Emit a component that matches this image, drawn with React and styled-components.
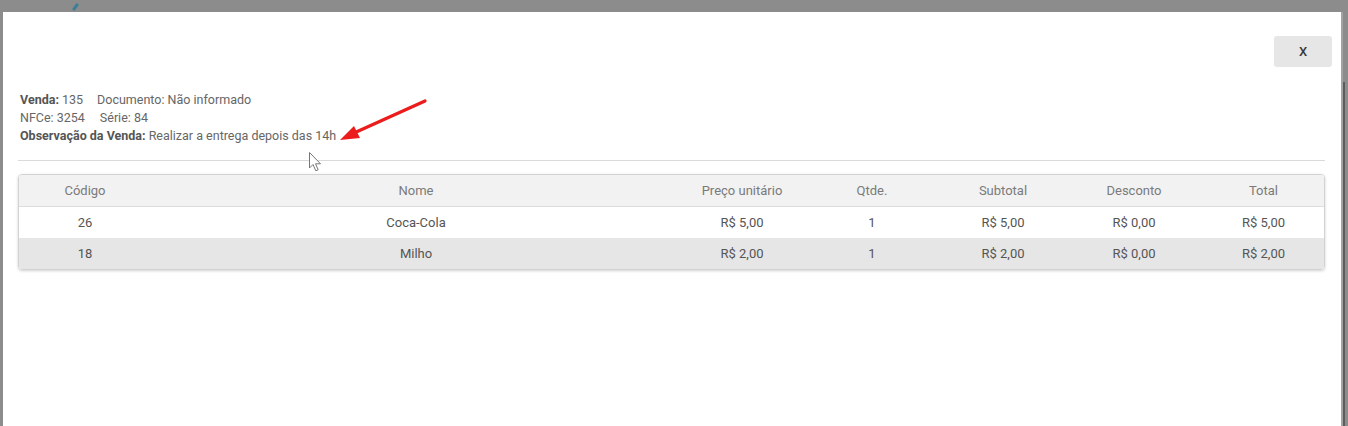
import React from 'react';
import styled, { createGlobalStyle } from 'styled-components';

const Global = createGlobalStyle`
  html, body {
    margin: 0;
    padding: 0;
    height: 100%;
    overflow: hidden;
  }
  body {
    background: #8c8c8c;
    font-family: Roboto, "Liberation Sans", Arial, sans-serif;
  }
`;

const Backdrop = styled.div`
  display: flex;
  height: 426px;
  padding: 12px 0 0 3px;
  box-sizing: border-box;
  position: relative;
`;

const TopMark = styled.span`
  position: absolute;
  left: 74px;
  top: 3px;
  width: 3px;
  height: 8px;
  background: #3b7f95;
  transform: rotate(35deg);
  border-radius: 1px;
`;

const Modal = styled.div`
  flex: 1;
  background: #fff;
  position: relative;
  display: flex;
  flex-direction: column;
`;

const Gutter = styled.div`
  width: 7px;
  display: flex;
  .edge {
    width: 2px;
    background: #a3a3a3;
  }
  .bar {
    width: 2px;
    margin-top: 70px;
    background: #5c5c5c;
  }
`;

const Header = styled.div`
  display: flex;
  justify-content: flex-end;
  padding: 24px 9px 0 0;
`;

const CloseButton = styled.button`
  width: 58px;
  height: 31px;
  border: none;
  border-radius: 3px;
  background: #e6e6e6;
  color: #3a3a3a;
  font-family: Roboto, "Liberation Sans", Arial, sans-serif;
  font-size: 13px;
  font-weight: 500;
  cursor: pointer;
`;

const Info = styled.div`
  margin-top: 24px;
  padding: 0 16px 0 17px;
  font-size: 12.5px;
  line-height: 18px;
  color: #666;
`;

const Line = styled.div`
  display: flex;
`;

const Field = styled.span`
  margin-right: ${p => p.gap || 0}px;
  b {
    color: #555;
    font-weight: 700;
  }
`;

const Divider = styled.hr`
  margin: 15px 16px 0 15px;
  border: none;
  border-top: 1px solid #dadada;
`;

const TableBox = styled.div`
  margin: 13px 16px 0 15px;
  border: 1px solid #d2d2d2;
  border-radius: 4px;
  overflow: hidden;
  box-shadow: 0 1px 3px rgba(0, 0, 0, 0.18);
`;

const Table = styled.table`
  width: 100%;
  border-collapse: collapse;
  table-layout: fixed;
  font-size: 13px;
`;

const Th = styled.th`
  height: 31px;
  padding: 0;
  font-weight: 400;
  color: #7a7a7a;
  background: #f2f2f2;
  border-bottom: 1px solid #dcdcdc;
  text-align: center;
`;

const Row = styled.tr`
  background: ${p => (p.alt ? '#e6e6e6' : '#fff')};
`;

const Td = styled.td`
  height: 31px;
  padding: 0;
  color: #555;
  text-align: center;
`;

const Arrow = styled.svg`
  position: absolute;
  left: 327px;
  top: 78px;
`;

const Pointer = styled.svg`
  position: absolute;
  left: 305px;
  top: 139px;
`;

const columns = [
  { label: 'Código', width: 132 },
  { label: 'Nome', width: 530 },
  { label: 'Preço unitário', width: 122 },
  { label: 'Qtde.', width: 138 },
  { label: 'Subtotal', width: 124 },
  { label: 'Desconto', width: 138 },
  { label: 'Total' },
];

const items = [
  ['26', 'Coca-Cola', 'R$ 5,00', '1', 'R$ 5,00', 'R$ 0,00', 'R$ 5,00'],
  ['18', 'Milho', 'R$ 2,00', '1', 'R$ 2,00', 'R$ 0,00', 'R$ 2,00'],
];

export default function App() {
  return (
    <>
      <Global />
      <Backdrop>
        <TopMark />
        <Modal>
          <Header>
            <CloseButton>X</CloseButton>
          </Header>
          <Info>
            <Line>
              <Field gap={14}><b>Venda:</b> 135</Field>
              <Field>Documento: Não informado</Field>
            </Line>
            <Line>
              <Field gap={15}>NFCe: 3254</Field>
              <Field>Série: 84</Field>
            </Line>
            <Line>
              <Field><b>Observação da Venda:</b> Realizar a entrega depois das 14h</Field>
            </Line>
          </Info>
          <Divider />
          <TableBox>
            <Table>
              <colgroup>
                {columns.map(c => (
                  <col key={c.label} style={c.width ? { width: c.width } : undefined} />
                ))}
              </colgroup>
              <thead>
                <tr>
                  {columns.map(c => (
                    <Th key={c.label}>{c.label}</Th>
                  ))}
                </tr>
              </thead>
              <tbody>
                {items.map((r, i) => (
                  <Row key={r[0]} alt={i % 2 === 1}>
                    {r.map((v, j) => (
                      <Td key={j}>{v}</Td>
                    ))}
                  </Row>
                ))}
              </tbody>
            </Table>
          </TableBox>

          <Arrow width="100" height="60" viewBox="0 0 100 60">
            <line x1="95" y1="11" x2="24" y2="43" stroke="#ec1c1c" strokeWidth="3.2" strokeLinecap="round" />
            <polygon points="10,50 24,36 30,48" fill="#ec1c1c" />
          </Arrow>

          <Pointer width="16" height="22" viewBox="0 0 16 22">
            <path
              d="M1.5 1.5 L1.5 17 L5 13.5 L7.8 19.8 L10.2 18.8 L7.5 12.8 L12.5 12.8 Z"
              fill="#fff"
              stroke="#777"
              strokeWidth="1"
              strokeLinejoin="round"
            />
          </Pointer>
        </Modal>
        <Gutter>
          <div className="edge" />
          <div className="bar" />
        </Gutter>
      </Backdrop>
    </>
  );
}
